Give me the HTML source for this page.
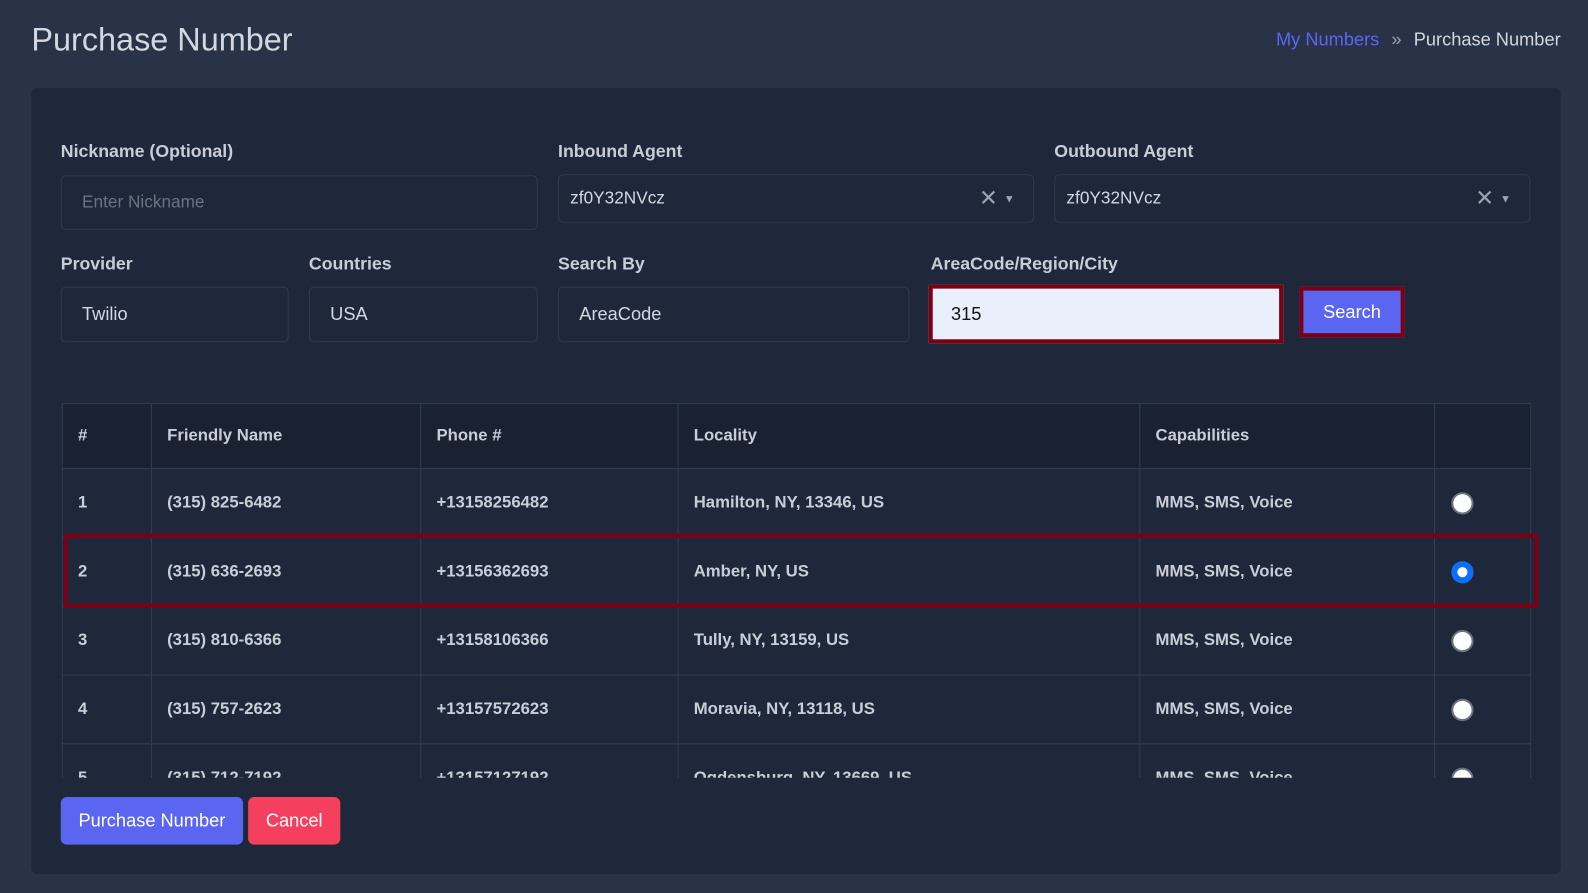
<!DOCTYPE html>
<html><head><style>
*{box-sizing:border-box;margin:0;padding:0}
html,body{width:1588px;height:893px;background:#283347;overflow:hidden}
body{font-family:"Liberation Sans",sans-serif;color:#c9ced6}
#w{position:absolute;left:0;top:0;width:1568px;height:882px;transform:scale(1.01276);transform-origin:0 0}
.abs{position:absolute}
h1{position:absolute;left:31px;top:21px;font-size:32px;font-weight:400;color:#d4d8de}
.bc{position:absolute;right:27px;top:29px;font-size:18px}
.card{position:absolute;left:31px;top:87px;width:1510px;height:776px;background:#1f283a;border-radius:6px}
.lbl{position:absolute;font-size:17.5px;font-weight:700;color:#c9ced6}
.inp{position:absolute;border:1px solid #2f3a4d;border-radius:5px;background:#1f283a;font-size:17px;color:#d4d8de;padding-left:20px;display:flex;align-items:center}
table{border-collapse:collapse;font-size:16.5px;font-weight:700;color:#c9ced6}
td,th{border:1px solid #323e52;text-align:left;padding-left:15px}
th{background:#1a2231;height:64px}
td{height:68px}
.r{width:22px;height:22px;border-radius:50%;background:#fff;border:2px solid #6b7280;display:inline-block;vertical-align:middle;margin-left:1px}
.r.on{background:#fff;border:6px solid #0d6efd}
.btn{position:absolute;color:#fff;font-size:18px;display:flex;align-items:center;justify-content:center;border-radius:6px}
</style></head><body><div id="w">
<h1>Purchase Number</h1>
<div class="bc"><span style="color:#5b66f0">My Numbers</span><span style="color:#9aa3b0;margin:0 12px">»</span><span style="color:#d4d8de">Purchase Number</span></div>
<div class="card"></div>
<div class="lbl" style="left:60px;top:139px">Nickname (Optional)</div>
<div class="lbl" style="left:551px;top:139px">Inbound Agent</div>
<div class="lbl" style="left:1041px;top:139px">Outbound Agent</div>
<div class="inp" style="left:60px;top:173px;width:471px;height:54px;color:#6b7382">Enter Nickname</div>
<div class="inp" style="left:551px;top:172px;width:470px;height:48px;padding-left:11px">zf0Y32NVcz<span style="position:absolute;right:18px;color:#9aa3b0;font-size:22px">✕<span style="font-size:11px;margin-left:6px;vertical-align:middle">▼</span></span></div>
<div class="inp" style="left:1041px;top:172px;width:470px;height:48px;padding-left:11px">zf0Y32NVcz<span style="position:absolute;right:18px;color:#9aa3b0;font-size:22px">✕<span style="font-size:11px;margin-left:6px;vertical-align:middle">▼</span></span></div>
<div class="lbl" style="left:60px;top:250px">Provider</div>
<div class="lbl" style="left:305px;top:250px">Countries</div>
<div class="lbl" style="left:551px;top:250px">Search By</div>
<div class="lbl" style="left:919px;top:250px">AreaCode/Region/City</div>
<div class="inp" style="left:60px;top:283px;width:225px;height:55px;font-size:18px">Twilio</div>
<div class="inp" style="left:305px;top:283px;width:226px;height:55px;font-size:18px">USA</div>
<div class="inp" style="left:551px;top:283px;width:347px;height:55px;font-size:18px">AreaCode</div>
<div class="abs" style="left:917px;top:281px;width:350px;height:58px;border:4px solid #7c0014;background:#e9f0fb;color:#111;font-size:18px;padding-left:18px;display:flex;align-items:center">315</div>
<div class="abs" style="left:1283px;top:283px;width:104px;height:50px;border:4px solid #7c0014;background:#5b66f0;color:#fff;font-size:18px;display:flex;align-items:center;justify-content:center">Search</div>
<div class="abs" style="left:61px;top:398px;width:1451px;height:370px;overflow:hidden">
<table style="width:1451px">
<tr><th style="width:88px">#</th><th style="width:266px">Friendly Name</th><th style="width:254px">Phone #</th><th style="width:456px">Locality</th><th style="width:291px">Capabilities</th><th></th></tr>
<tr><td>1</td><td>(315) 825-6482</td><td>+13158256482</td><td>Hamilton, NY, 13346, US</td><td>MMS, SMS, Voice</td><td><span class="r"></span></td></tr>
<tr><td>2</td><td>(315) 636-2693</td><td>+13156362693</td><td>Amber, NY, US</td><td>MMS, SMS, Voice</td><td><span class="r on"></span></td></tr>
<tr><td>3</td><td>(315) 810-6366</td><td>+13158106366</td><td>Tully, NY, 13159, US</td><td>MMS, SMS, Voice</td><td><span class="r"></span></td></tr>
<tr><td>4</td><td>(315) 757-2623</td><td>+13157572623</td><td>Moravia, NY, 13118, US</td><td>MMS, SMS, Voice</td><td><span class="r"></span></td></tr>
<tr><td>5</td><td>(315) 712-7192</td><td>+13157127192</td><td>Ogdensburg, NY, 13669, US</td><td>MMS, SMS, Voice</td><td><span class="r"></span></td></tr>
</table></div>
<div class="abs" style="left:63px;top:527px;width:1456px;height:73px;border:4px solid #7c0014"></div>
<div class="btn" style="left:60px;top:787px;width:180px;height:47px;background:#5b66f0">Purchase Number</div>
<div class="btn" style="left:245px;top:787px;width:91px;height:47px;background:#f43f5e">Cancel</div>
</div></body></html>
